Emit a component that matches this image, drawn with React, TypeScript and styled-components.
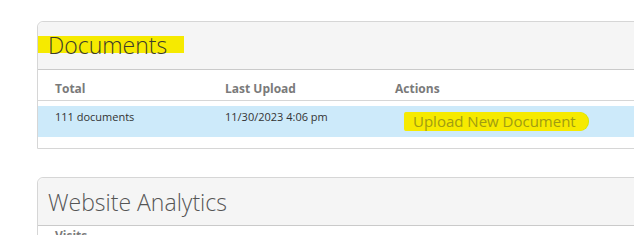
import React from 'react';
import styled, { createGlobalStyle } from 'styled-components';

const GlobalStyle = createGlobalStyle`
    html, body {
        margin: 0;
        padding: 0;
        background: #ffffff;
        font-family: 'Open Sans', 'Liberation Sans', sans-serif;
    }
`;

const Page = styled.div`
    width: 634px;
    height: 235px;
    overflow: hidden;
    padding: 21px 0 0 37px;
    box-sizing: border-box;
    display: flex;
    flex-direction: column;
    gap: 28px;
`;

const Card = styled.section`
    width: 660px;
    flex-shrink: 0;
    border: 1px solid #d6d6d6;
    border-radius: 6px 6px 0 0;
    background: #ffffff;
`;

const CardHeader = styled.header`
    height: 47px;
    display: flex;
    align-items: center;
    background: #f5f5f5;
    border-bottom: 1px solid #cacaca;
    border-radius: 6px 6px 0 0;
`;

const Title = styled.h2<{ $marked?: boolean }>`
    margin: 0;
    display: inline-block;
    font-size: 23px;
    font-weight: 300;
    color: ${(p) => (p.$marked ? '#3c3c2c' : '#555555')};
    line-height: ${(p) => (p.$marked ? '19px' : '30px')};
    padding: ${(p) => (p.$marked ? '0 17px 0 10px' : '0 0 0 10px')};
    background: ${(p) => (p.$marked ? 'linear-gradient(#f6ea00 0, #f6ea00 92%, transparent 92%)' : 'transparent')};
    margin-top: ${(p) => (p.$marked ? '-1px' : '1px')};
`;

const Table = styled.div`
    padding-bottom: 11px;
`;

const HeadRow = styled.div`
    display: grid;
    grid-template-columns: 170px 170px 170px;
    padding: 10px 0 3px 17px;
    border-bottom: 1px solid #d6d6d6;
    margin-bottom: 5px;
`;

const HeadCell = styled.div`
    font-size: 12px;
    font-weight: 700;
    color: #7a7a7a;
    line-height: 17px;
`;

const BodyRow = styled.div`
    display: grid;
    grid-template-columns: 170px 170px 170px;
    align-items: start;
    height: 31px;
    padding-left: 17px;
    background: #cdeafa;
`;

const BodyCell = styled.div`
    font-size: 11px;
    color: #333333;
    line-height: 16px;
    padding-top: 3px;
`;

const MarkedLink = styled.a`
    display: inline-block;
    margin: 6px 0 0 9px;
    padding: 0 12px 0 9px;
    height: 19px;
    line-height: 19px;
    font-size: 15px;
    color: #a09c12;
    text-decoration: none;
    background: #f6ea00;
    border-radius: 2px 9px 9px 2px;
    box-shadow: 1px 0 0 #d7e600;
    white-space: nowrap;
    cursor: pointer;
`;

const AnalyticsBody = styled.div`
    padding: 1px 0 0 17px;
    height: 30px;
`;

const App: React.FC = () => {
    return (
        <>
            <GlobalStyle />
            <Page>
                <Card>
                    <CardHeader>
                        <Title $marked>Documents</Title>
                    </CardHeader>
                    <Table>
                        <HeadRow>
                            <HeadCell>Total</HeadCell>
                            <HeadCell>Last Upload</HeadCell>
                            <HeadCell>Actions</HeadCell>
                        </HeadRow>
                        <BodyRow>
                            <BodyCell>111 documents</BodyCell>
                            <BodyCell>11/30/2023 4:06 pm</BodyCell>
                            <div>
                                <MarkedLink>Upload New Document</MarkedLink>
                            </div>
                        </BodyRow>
                    </Table>
                </Card>
                <Card>
                    <CardHeader>
                        <Title>Website Analytics</Title>
                    </CardHeader>
                    <AnalyticsBody>
                        <HeadCell>Visits</HeadCell>
                    </AnalyticsBody>
                </Card>
            </Page>
        </>
    );
};

export default App;
